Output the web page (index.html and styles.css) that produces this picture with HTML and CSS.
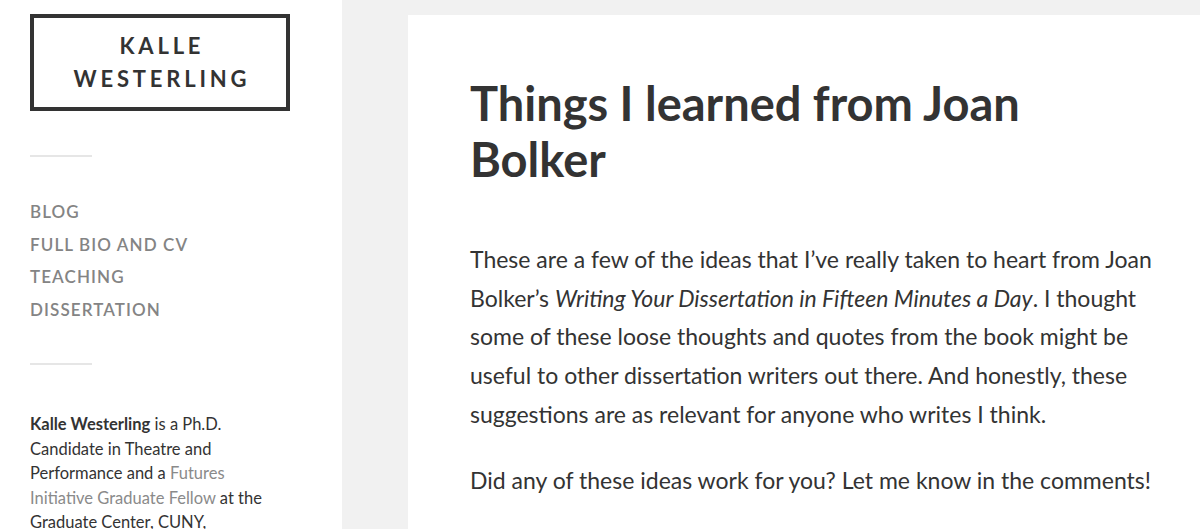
FILE: index.html
```html
<!DOCTYPE html>
<html lang="en">
<head>
<meta charset="utf-8">
<title>Things I learned from Joan Bolker – Kalle Westerling</title>
<link rel="stylesheet" href="styles.css">
</head>
<body>
<div class="page">
  <aside class="sidebar">
    <div class="logo">
      <span class="logo-line">KALLE</span>
      <span class="logo-line">WESTERLING</span>
    </div>
    <hr class="sep sep-top">
    <nav class="menu">
      <a href="#">BLOG</a>
      <a href="#">FULL BIO AND CV</a>
      <a href="#">TEACHING</a>
      <a href="#">DISSERTATION</a>
    </nav>
    <hr class="sep sep-bottom">
    <p class="bio"><strong>Kalle Westerling</strong> is a Ph.D. Candidate in Theatre and Performance and a <a href="#">Futures Initiative Graduate Fellow</a> at the Graduate Center, CUNY,</p>
  </aside>
  <main class="main">
    <article class="card">
      <h1 class="title">Things I learned from Joan Bolker</h1>
      <div class="content">
        <p>These are a few of the ideas that I’ve really taken to heart from Joan Bolker’s <em>Writing Your Dissertation in Fifteen Minutes a Day</em>. I thought some of these loose thoughts and quotes from the book might be useful to other dissertation writers out there. And honestly, these suggestions are as relevant for anyone who writes I think.</p>
        <p>Did any of these ideas work for you? Let me know in the comments!</p>
      </div>
    </article>
  </main>
</div>
</body>
</html>
```
FILE: styles.css
```css
html, body {
  margin: 0;
  padding: 0;
}
body {
  background: #f1f1f1;
  font-family: Lato, "Open Sans", "Liberation Sans", sans-serif;
  color: #333;
  height: 529px;
  overflow: hidden;
}
.page {
  display: flex;
  align-items: flex-start;
  height: 529px;
}
.sidebar {
  width: 342px;
  flex: 0 0 342px;
  background: #fff;
  height: 529px;
  box-sizing: border-box;
  padding: 14px 0 0 30px;
}
.logo {
  width: 260px;
  box-sizing: border-box;
  border: 4px solid #333;
  padding: 12px 0;
  display: flex;
  flex-direction: column;
  align-items: center;
}
.logo-line {
  display: block;
  font-size: 22px;
  line-height: 32.5px;
  font-weight: 700;
  letter-spacing: 3.8px;
  padding-left: 3.8px;
  color: #333;
}
.sep {
  width: 62px;
  height: 2px;
  border: 0;
  background: #e6e6e6;
  margin: 0;
}
.sep-top {
  margin-top: 44px;
}
.menu {
  display: flex;
  flex-direction: column;
  margin-top: 39px;
}
.menu a {
  font-size: 17px;
  line-height: 32.5px;
  font-weight: 600;
  letter-spacing: 1.1px;
  color: #848484;
  text-decoration: none;
}
.sep-bottom {
  margin-top: 37px;
}
.bio {
  margin: 47px 0 0;
  width: 245px;
  font-size: 16.5px;
  line-height: 24.6px;
  color: #333;
}
.bio strong {
  font-weight: 700;
}
.bio a {
  color: #8a8a8a;
  text-decoration: none;
}
.main {
  flex: 1;
  padding: 15px 0 0 66px;
  min-width: 0;
}
.card {
  background: #fff;
  min-height: 600px;
  padding: 60px 0 0 62px;
}
.title {
  margin: 0;
  font-size: 47px;
  line-height: 56.4px;
  font-weight: 700;
  color: #333;
  width: 620px;
}
.content {
  margin-top: 52px;
  width: 700px;
}
.content p {
  margin: 0 0 27px;
  font-size: 23px;
  line-height: 38.75px;
  color: #333;
}
.content em {
  font-style: italic;
}
```
